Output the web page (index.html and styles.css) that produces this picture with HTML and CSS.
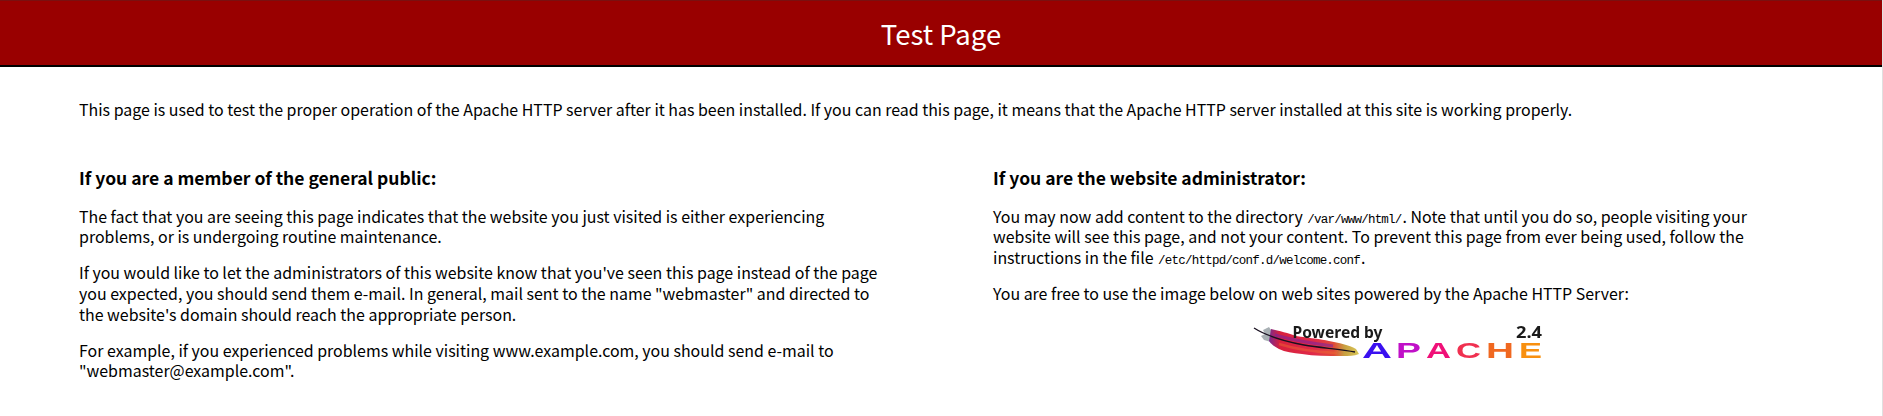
FILE: index.html
```html
<!DOCTYPE html>
<html lang="en">
<head>
<meta charset="utf-8">
<title>Test Page for the Apache HTTP Server</title>
<link rel="stylesheet" href="styles.css">
</head>
<body>
<header class="banner"><h1 class="banner-title">Test Page</h1></header>
<main class="content">
  <p class="lead">This page is used to test the proper operation of the Apache HTTP server after it has been installed. If you can read this page, it means that the Apache HTTP server installed at this site is working properly.</p>
  <div class="columns">
    <section class="column">
      <h2 class="column-title">If you are a member of the general public:</h2>
      <p class="text">The fact that you are seeing this page indicates that the website you just visited is either experiencing problems, or is undergoing routine maintenance.</p>
      <p class="text">If you would like to let the administrators of this website know that you've seen this page instead of the page you expected, you should send them e-mail. In general, mail sent to the name "webmaster" and directed to the website's domain should reach the appropriate person.</p>
      <p class="text">For example, if you experienced problems while visiting www.example.com, you should send e-mail to "webmaster@example.com".</p>
    </section>
    <section class="column">
      <h2 class="column-title">If you are the website administrator:</h2>
      <p class="text">You may now add content to the directory <code class="path">/var/www/html/</code>. Note that until you do so, people visiting your website will see this page, and not your content. To prevent this page from ever being used, follow the instructions in the file <code class="path">/etc/httpd/conf.d/welcome.conf</code>.</p>
      <p class="text">You are free to use the image below on web sites powered by the Apache HTTP Server:</p>
      <div class="logo-wrap">
        <svg class="logo" width="296" height="42" viewBox="-2 0 296 42" role="img" aria-label="Powered by Apache 2.4">
          <defs>
            <linearGradient id="feather" x1="0" y1="0" x2="1" y2="0">
              <stop offset="0" stop-color="#7a2a90"/>
              <stop offset=".12" stop-color="#d8203c"/>
              <stop offset=".5" stop-color="#e02a4a"/>
              <stop offset=".72" stop-color="#e04a3a"/>
              <stop offset=".84" stop-color="#c8a040"/>
              <stop offset="1" stop-color="#d8c858"/>
            </linearGradient>
          </defs>
          <path d="M20 8 L14 11 L16 15 L12 17 L15 21 L22 23 L24 14 Z" fill="#a8b0b4"/>
          <path d="M22 10 C30 12 40 14 47 17 C60 19 72 20 80 22 C90 24 100 26 107 30 L110 35 C105 37 100 37 93 37 C78 37 65 37 53 35 C44 34 36 33 30 30 C26 28 22 25 20 22 Z" fill="url(#feather)"/>
          <path d="M26 16 C40 20 60 24 84 27" stroke="#6a20b0" stroke-width="3" fill="none" opacity=".5"/>
          <path d="M30 25 C46 30 66 33 88 34" stroke="#f06a30" stroke-width="2.5" fill="none" opacity=".45"/>
          <path d="M5 9 C16 16 34 22 55 26 C72 29 92 30 106 33" stroke="#181020" stroke-width="1.3" fill="none"/>
          <text class="logo-powered" x="43.5" y="18.5" textLength="90" lengthAdjust="spacingAndGlyphs">Powered by</text>
          <text class="logo-version" x="267" y="18.5" textLength="26" lengthAdjust="spacingAndGlyphs">2.4</text>
          <text class="logo-letter logo-a1" x="113" y="39" textLength="30" lengthAdjust="spacingAndGlyphs">A</text>
          <text class="logo-letter logo-p" x="147" y="39" textLength="25" lengthAdjust="spacingAndGlyphs">P</text>
          <text class="logo-letter logo-a2" x="177" y="39" textLength="25" lengthAdjust="spacingAndGlyphs">A</text>
          <text class="logo-letter logo-c" x="207" y="39" textLength="25" lengthAdjust="spacingAndGlyphs">C</text>
          <text class="logo-letter logo-h" x="237" y="39" textLength="28" lengthAdjust="spacingAndGlyphs">H</text>
          <text class="logo-letter logo-e" x="270" y="39" textLength="23" lengthAdjust="spacingAndGlyphs">E</text>
        </svg>
      </div>
    </section>
  </div>
</main>
</body>
</html>
```
FILE: styles.css
```css
* { box-sizing: border-box; }
html, body { margin: 0; padding: 0; background: #fff; }
body {
  font-family: "Noto Sans CJK KR", "Noto Sans", sans-serif;
  font-size: 15.95px;
  line-height: 20.8px;
  color: #000;
  border-right: 1px solid #e0e0e0;
  min-height: 416px;
}
.banner {
  height: 67px;
  padding-top: 2px;
  background: #990000;
  border-top: 1px solid #7a1010;
  border-bottom: 2px solid #000;
  display: flex;
  align-items: center;
  justify-content: center;
}
.banner-title { margin: 0; font-size: 27.5px; font-weight: 400; color: #fff; line-height: 1; }
.content { padding: 31.6px 79px 0; }
.lead { margin: 0 0 47px; }
.columns { display: grid; grid-template-columns: 804px 804px; column-gap: 110px; }
.column-title { margin: 0 0 15.2px; font-size: 17.5px; font-weight: 700; line-height: 24px; }
.text { margin: 0 0 15px; }
.path { font-family: "Liberation Mono", "DejaVu Sans Mono", monospace; font-size: 12.5px; letter-spacing: -0.77px; line-height: 1; margin: 0 1px; }
.logo-wrap { display: flex; justify-content: center; margin-top: 1.2px; }
.logo { display: block; filter: blur(0.3px); }
.logo-powered { font-family: "Noto Sans", sans-serif; font-size: 16.5px; font-weight: 700; fill: #1a1a1a; }
.logo-version { font-family: "Noto Sans", sans-serif; font-size: 15.5px; font-weight: 700; fill: #1a1a1a; }
.logo-letter { font-family: "Liberation Sans", sans-serif; font-size: 22px; font-weight: 700; }
.logo-a1 { fill: #3a10f0; }
.logo-p { fill: #c010c8; }
.logo-a2 { fill: #f01078; }
.logo-c { fill: #f03050; }
.logo-h { fill: #f06820; }
.logo-e { fill: #f89010; }
```
